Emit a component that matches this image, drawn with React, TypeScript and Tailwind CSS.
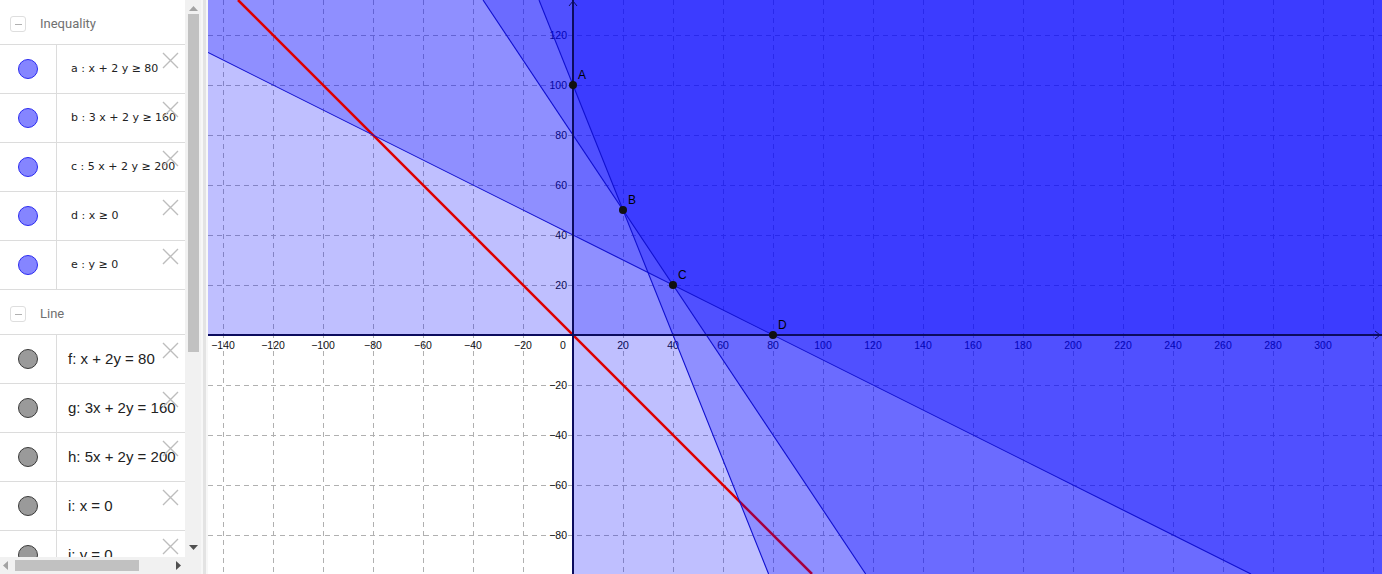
import React from "react";

const X = (x: number) => 573 + 2.5 * x;
const Y = (y: number) => 335 - 2.5 * y;

const inequalities = [
  "a : x + 2 y ≥ 80",
  "b : 3 x + 2 y ≥ 160",
  "c : 5 x + 2 y ≥ 200",
  "d : x ≥ 0",
  "e : y ≥ 0",
];

const lines = [
  "f: x + 2y = 80",
  "g: 3x + 2y = 160",
  "h: 5x + 2y = 200",
  "i: x = 0",
  "j: y = 0",
];

function DeleteIcon() {
  return (
    <svg className="absolute right-[6px] top-[7px]" width="17" height="17" viewBox="0 0 17 17">
      <path d="M1 1 L16 16 M16 1 L1 16" stroke="#bdbdbd" strokeWidth="1.4" fill="none" />
    </svg>
  );
}

function GroupHeader({ title, first }: { title: string; first?: boolean }) {
  return (
    <div
      className={
        first
          ? "flex h-[44px] items-center pt-[4px]"
          : "flex h-[45px] items-center border-t border-[#dcdcdc] pt-[4px]"
      }
    >
      <div className="ml-[10px] flex h-[16px] w-[16px] items-center justify-center rounded-[3px] border border-[#dedede]">
        <div className="h-px w-[7px] bg-[#b0b0b0]" />
      </div>
      <span className="ml-[14px] text-[13px] text-[#707070]">{title}</span>
    </div>
  );
}

function Row({ text, kind }: { text: string; kind: "ineq" | "line" }) {
  return (
    <div className="relative flex h-[49px] border-t border-[#dcdcdc]">
      <div className="flex w-[57px] shrink-0 items-center justify-center border-r border-[#dcdcdc]">
        {kind === "ineq" ? (
          <div className="h-[20px] w-[20px] rounded-full border border-[#2b2bf0] bg-[#8585ff]" />
        ) : (
          <div className="h-[20px] w-[20px] rounded-full border border-[#3a3a3a] bg-[#9a9a9a]" />
        )}
      </div>
      {kind === "ineq" ? (
        <div className="flex items-center whitespace-pre pl-[14px] font-['DejaVu_Sans',sans-serif] text-[11px] text-[#222]">
          {text}
        </div>
      ) : (
        <div className="flex items-center whitespace-pre pl-[11px] font-['Liberation_Sans',Arial,sans-serif] text-[15px] text-[#222]">
          {text}
        </div>
      )}
      <DeleteIcon />
    </div>
  );
}

function Graph() {
  const gx: number[] = [];
  for (let k = -7; k <= 16; k++) gx.push(573 + 50 * k);
  const gy: number[] = [];
  for (let k = -6; k <= 4; k++) gy.push(335 + 50 * k);
  const xl: number[] = [];
  for (let v = -140; v <= 300; v += 20) if (v !== 0) xl.push(v);
  const yl: number[] = [];
  for (let v = -80; v <= 120; v += 20) if (v !== 0) yl.push(v);
  const fmt = (v: number) => (v < 0 ? "\u2212" + Math.abs(v) : String(v));
  const fill = "rgba(0,0,255,0.25)";

  return (
    <svg width="1174" height="574" viewBox="208 0 1174 574" className="block">
      <rect x="208" y="0" width="1174" height="574" fill="#fff" />
      <g stroke="#b0b0b0" strokeWidth="1" strokeDasharray="5 4">
        {gx.map((x) => (
          <line key={"gx" + x} x1={x + 0.5} y1="0" x2={x + 0.5} y2="574" />
        ))}
        {gy.map((y) => (
          <line key={"gy" + y} x1="208" y1={y + 0.5} x2="1382" y2={y + 0.5} />
        ))}
      </g>
      <g fontFamily="'Liberation Sans', Arial, sans-serif" fontSize="10.5" fill="#111">
        {xl.map((v) => (
          <text key={"xl" + v} x={X(v)} y="349" textAnchor="middle">
            {fmt(v)}
          </text>
        ))}
        {yl.map((v) => (
          <text key={"yl" + v} x="567" y={Y(v) + 4} textAnchor="end">
            {fmt(v)}
          </text>
        ))}
        <text x="563" y="349" textAnchor="middle">0</text>
      </g>
      {/* a: x + 2y >= 80 */}
      <polygon points="208,0 1382,0 1382,574 1251,574 208,52.5" fill={fill} />
      {/* b: 3x + 2y >= 160 */}
      <polygon points="483,0 1382,0 1382,574 865.7,574" fill={fill} />
      {/* d: x >= 0 */}
      <polygon points="573,0 1382,0 1382,574 573,574" fill={fill} />
      {/* e: y >= 0 */}
      <polygon points="208,0 1382,0 1382,335 208,335" fill={fill} />
      <line x1="238" y1="0" x2="812" y2="574" stroke="#dd0000" strokeWidth="2.5" />
      {/* c: 5x + 2y >= 200 */}
      <polygon points="539,0 1382,0 1382,574 768.6,574" fill={fill} />
      <g stroke="#1010d0" strokeWidth="1.1" fill="none">
        <line x1="208" y1="52.5" x2="1251" y2="574" />
        <line x1="483" y1="0" x2="865.7" y2="574" />
        <line x1="539" y1="0" x2="768.6" y2="574" />
      </g>
      <g stroke="#0c0c5e" strokeWidth="2" fill="none">
        <line x1="208" y1="335" x2="1382" y2="335" />
        <line x1="573" y1="0" x2="573" y2="574" />
        <path d="M569 6 L573 1 L577 6" strokeWidth="1" />
        <path d="M1375 331 L1380 335 L1375 339" strokeWidth="1" />
      </g>
      <g fill="#111">
        <circle cx={X(0)} cy={Y(100)} r="4" />
        <circle cx={X(20)} cy={Y(50)} r="4" />
        <circle cx={X(40)} cy={Y(20)} r="4" />
        <circle cx={X(80)} cy={Y(0)} r="4" />
      </g>
      <g fontFamily="'Liberation Sans', Arial, sans-serif" fontSize="12" fill="#000">
        <text x="578" y="79">A</text>
        <text x="628" y="204">B</text>
        <text x="678" y="279">C</text>
        <text x="778" y="329">D</text>
      </g>
    </svg>
  );
}

export default function App() {
  return (
    <div className="flex h-[574px] w-[1382px] overflow-hidden bg-white font-['Roboto',sans-serif]">
      <div className="flex w-[201px] shrink-0 flex-col">
        <div className="flex min-h-0 flex-1">
          <div className="w-[185px] shrink-0 overflow-hidden">
            <GroupHeader title="Inequality" first />
            {inequalities.map((t) => (
              <Row key={t} text={t} kind="ineq" />
            ))}
            <GroupHeader title="Line" />
            {lines.map((t) => (
              <Row key={t} text={t} kind="line" />
            ))}
          </div>
          <div className="relative flex w-[16px] shrink-0 flex-col items-center bg-[#f1f1f1]">
            <svg className="mt-[6px]" width="9" height="5" viewBox="0 0 9 5">
              <path d="M0 5 L4.5 0 L9 5 Z" fill="#a3a3a3" />
            </svg>
            <div className="mt-[3px] h-[338px] w-[11px] bg-[#c1c1c1]" />
            <div className="flex-1" />
            <svg className="mb-[7px]" width="9" height="5" viewBox="0 0 9 5">
              <path d="M0 0 L9 0 L4.5 5 Z" fill="#505050" />
            </svg>
          </div>
        </div>
        <div className="flex h-[17px] shrink-0">
          <div className="flex w-[185px] items-center bg-[#f1f1f1]">
            <svg className="ml-[3px]" width="5" height="9" viewBox="0 0 5 9">
              <path d="M5 0 L0 4.5 L5 9 Z" fill="#a3a3a3" />
            </svg>
            <div className="ml-[7px] h-[11px] w-[124px] bg-[#c1c1c1]" />
            <div className="flex-1" />
            <svg className="mr-[4px]" width="5" height="9" viewBox="0 0 5 9">
              <path d="M0 0 L5 4.5 L0 9 Z" fill="#505050" />
            </svg>
          </div>
          <div className="w-[16px] bg-[#f1f1f1]" />
        </div>
      </div>
      <div className="w-[7px] shrink-0 border-x-2 border-[#f7f7f7] bg-[#e3e3e3]" />
      <div className="flex-1">
        <Graph />
      </div>
    </div>
  );
}
